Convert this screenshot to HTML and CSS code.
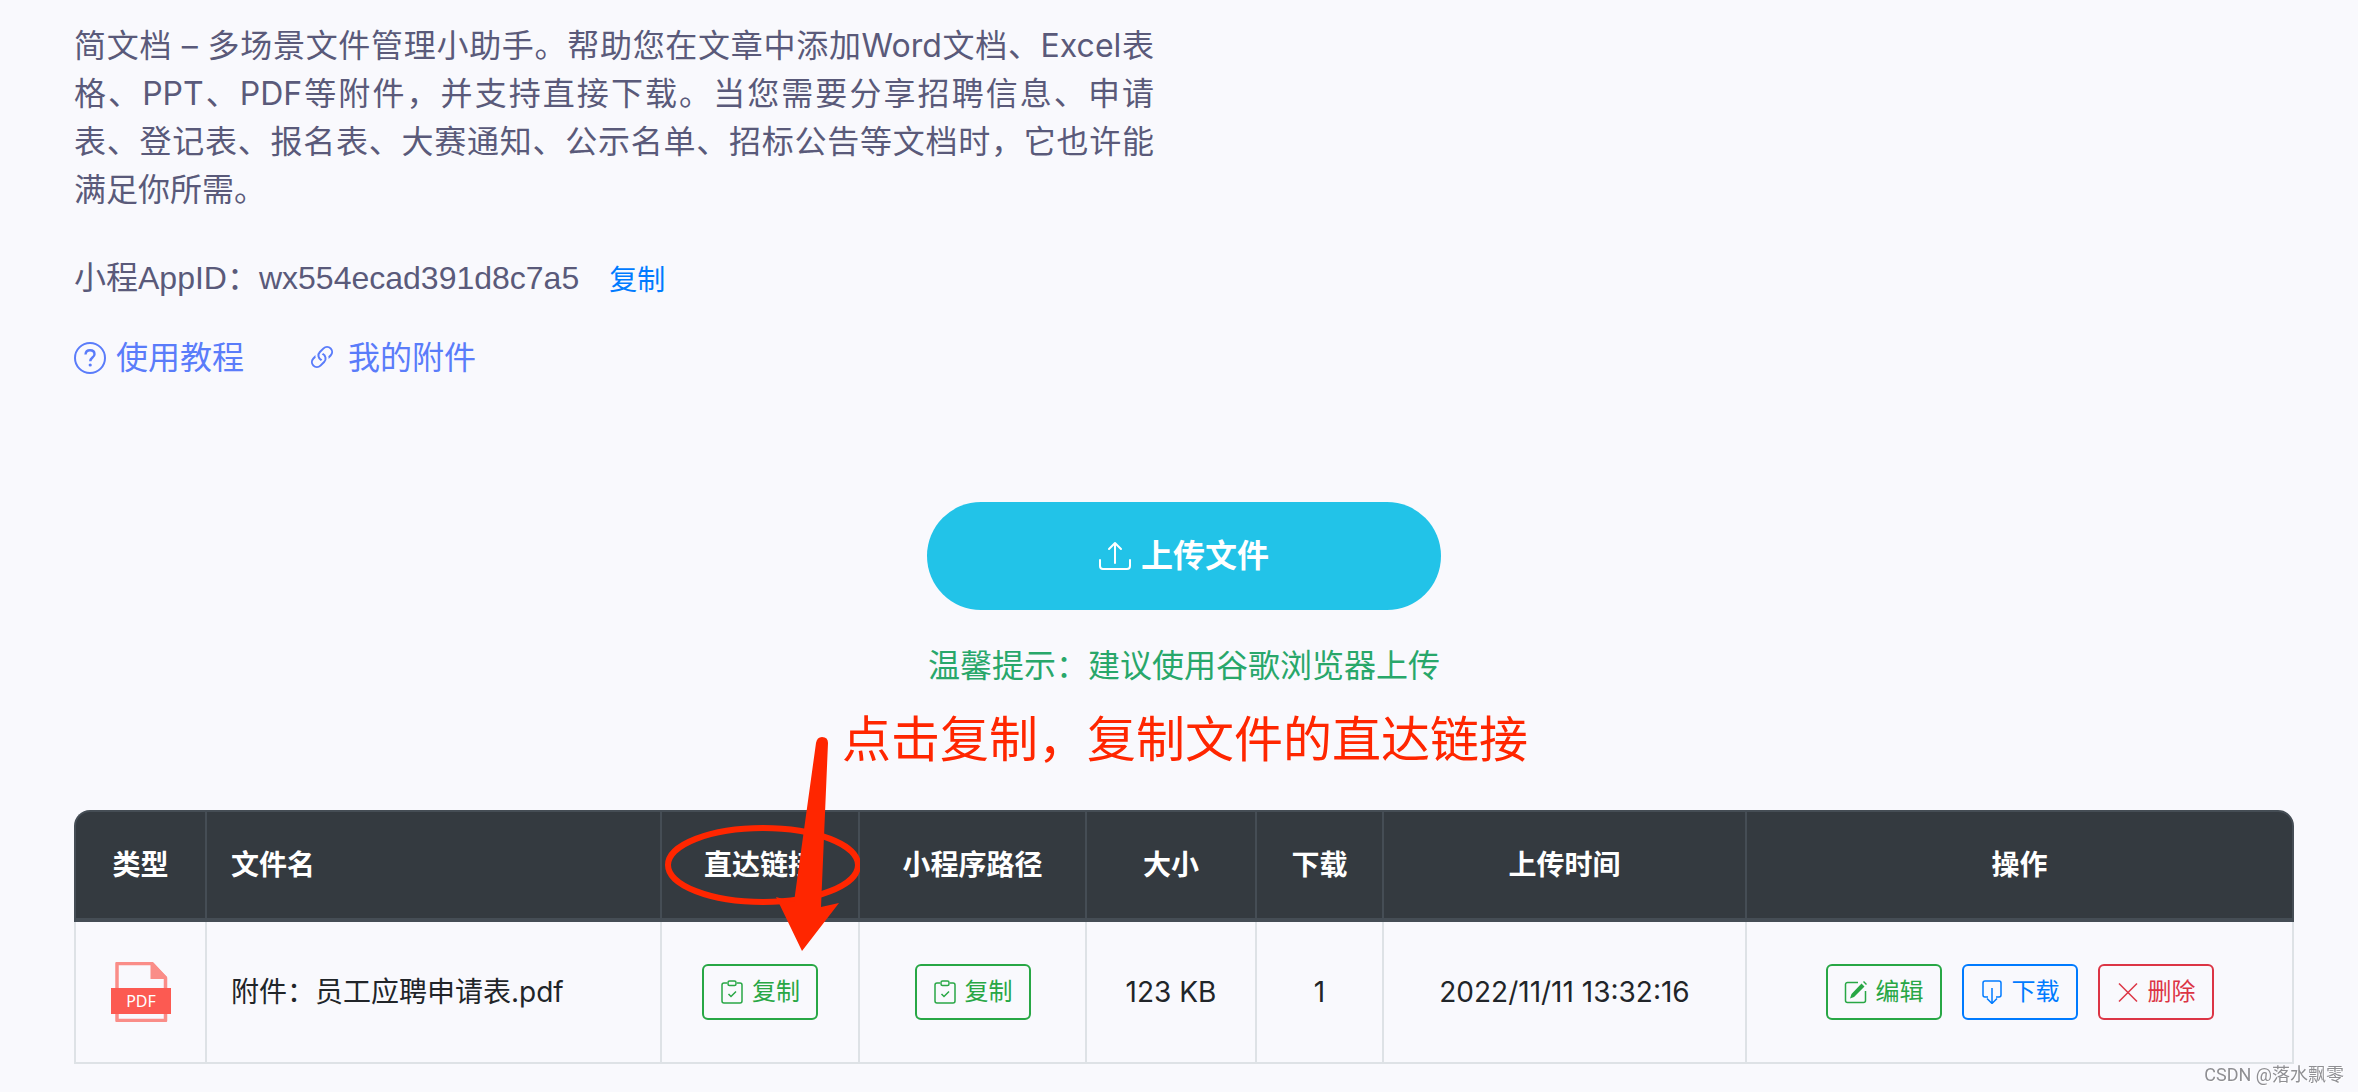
FILE: index.html
```html
<!DOCTYPE html>
<html lang="zh-CN">
<head>
  <meta charset="UTF-8">
  <meta name="viewport" content="width=device-width, initial-scale=1.0">
  <title>简文档 - 我的附件</title>
  <link rel="stylesheet" href="styles.css">
</head>
<body>
  <main class="container">
    <p class="intro">简文档 – 多场景文件管理小助手。帮助您在文章中添加Word文档、Excel表格、PPT、PDF等附件，并支持直接下载。当您需要分享招聘信息、申请表、登记表、报名表、大赛通知、公示名单、招标公告等文档时，它也许能满足你所需。</p>

    <div class="appid">
      <span>小程AppID：wx554ecad391d8c7a5</span>
      <button type="button" class="copy-link">复制</button>
    </div>

    <nav class="links">
      <a href="#help">
        <svg class="icon-help" viewBox="0 0 32 32" fill="none" stroke="currentColor" stroke-width="2">
          <circle cx="16" cy="16" r="15"/>
          <path d="M11.500 12.500c.2-2.700 1.900-4.200 4.500-4.200s4.500 1.500 4.500 3.900c0 3.400-4.200 3.300-4.200 7" stroke-width="2.400"/>
          <circle cx="16.200" cy="23" r="1.600" fill="currentColor" stroke="none"/>
        </svg>
        使用教程
      </a>
      <a href="#files">
        <svg class="icon-link" viewBox="0 0 16 16" fill="currentColor">
          <path d="M4.715 6.542 3.343 7.914a3 3 0 1 0 4.243 4.243l1.828-1.829A3 3 0 0 0 8.586 5.500L8 6.086a1 1 0 0 0-.154.199 2 2 0 0 1 .861 3.337L6.880 11.450a2 2 0 1 1-2.830-2.830l.793-.792a4 4 0 0 1-.128-1.287z"/>
          <path d="M6.586 4.672A3 3 0 0 0 7.414 9.500l.775-.776a2 2 0 0 1-.896-3.346L9.120 3.550a2 2 0 1 1 2.830 2.830l-.793.792c.112.420.155.855.128 1.287l1.372-1.372a3 3 0 1 0-4.243-4.243z"/>
        </svg>
        我的附件
      </a>
    </nav>

    <section class="upload">
      <button type="button" class="upload-btn">
        <svg class="icon-upload" viewBox="0 0 32 32" fill="none" stroke="currentColor" stroke-width="2" stroke-linecap="round" stroke-linejoin="round">
          <path d="M1 20v6a3 3 0 0 0 3 3h24a3 3 0 0 0 3-3v-6"/>
          <path d="M16 23V3M10 9l6-6 6 6"/>
        </svg>
        上传文件
      </button>
      <p class="tip">温馨提示：建议使用谷歌浏览器上传</p>
    </section>

    <table class="files">
      <colgroup>
        <col class="col-type">
        <col>
        <col class="col-direct">
        <col class="col-path">
        <col class="col-size">
        <col class="col-count">
        <col class="col-time">
        <col class="col-actions">
      </colgroup>
      <thead>
        <tr>
          <th>类型</th>
          <th class="name">文件名</th>
          <th class="direct">
            直达链接
            <svg class="mark" viewBox="0 0 200 220" fill="#ff2600">
              <ellipse cx="103" cy="129" rx="95" ry="37" fill="none" stroke="#ff2600" stroke-width="6"/>
              <path d="M156 7 Q157 1 162 1 Q168 1 168 7 L161 171 L179 167 L142 215 L116 161 L134 166 Z"/>
            </svg>
            <span class="mark-text">点击复制，复制文件的直达链接</span>
          </th>
          <th>小程序路径</th>
          <th>大小</th>
          <th>下载</th>
          <th>上传时间</th>
          <th>操作</th>
        </tr>
      </thead>
      <tbody>
        <tr>
          <td>
            <svg class="icon-pdf" viewBox="0 0 60 60">
              <path d="M6 1.500h35L54.500 16v42.500H6z" fill="none" stroke="#fa8d88" stroke-width="3.500" stroke-linejoin="round"/>
              <path d="M39.500 1H42L56 15v2H39.500z" fill="#fa8d88"/>
              <path d="M0 26h60v26H0z" fill="#fc5a52"/>
              <text x="30" y="45" text-anchor="middle" class="pdf-label">PDF</text>
            </svg>
          </td>
          <td class="name">附件：员工应聘申请表.pdf</td>
          <td>
            <button type="button" class="btn btn-green">
              <svg viewBox="0 0 24 24" fill="none" stroke="currentColor" stroke-width="1.500">
                <path d="M7 3H4a2 2 0 0 0-2 2v16a2 2 0 0 0 2 2h16a2 2 0 0 0 2-2V5a2 2 0 0 0-2-2h-3M8.500 14l2.500 2.500 5-5"/>
                <rect x="8" y="1" width="8" height="4.500" rx="1.500"/>
              </svg>
              复制
            </button>
          </td>
          <td>
            <button type="button" class="btn btn-green">
              <svg viewBox="0 0 24 24" fill="none" stroke="currentColor" stroke-width="1.500">
                <path d="M7 3H4a2 2 0 0 0-2 2v16a2 2 0 0 0 2 2h16a2 2 0 0 0 2-2V5a2 2 0 0 0-2-2h-3M8.500 14l2.500 2.500 5-5"/>
                <rect x="8" y="1" width="8" height="4.500" rx="1.500"/>
              </svg>
              复制
            </button>
          </td>
          <td>123 KB</td>
          <td>1</td>
          <td>2022/11/11 13:32:16</td>
          <td>
            <div class="actions">
              <button type="button" class="btn btn-green">
                <svg viewBox="0 0 24 24" fill="none" stroke="currentColor" stroke-width="1.500">
                  <path d="M14 2.500H3.500a2 2 0 0 0-2 2v16a2 2 0 0 0 2 2h16a2 2 0 0 0 2-2V11"/>
                  <path d="M17.500 3.500l3 3L10 17l-4 1.500L7.500 14zM19 2l1-1 3 3-1 1z" fill="currentColor" stroke="none"/>
                </svg>
                编辑
              </button>
              <button type="button" class="btn btn-blue">
                <svg viewBox="0 0 24 24" fill="none" stroke="currentColor" stroke-width="1.500">
                  <path d="M8 17H5a2 2 0 0 1-2-2V3a2 2 0 0 1 2-2h14a2 2 0 0 1 2 2v12a2 2 0 0 1-2 2h-3M12 8v15M7 18.500l5 5 5-5"/>
                </svg>
                下载
              </button>
              <button type="button" class="btn btn-red">
                <svg viewBox="0 0 24 24" fill="none" stroke="currentColor" stroke-width="1.500">
                  <path d="M3 3.500l18 18M21 3.500l-18 18"/>
                </svg>
                删除
              </button>
            </div>
          </td>
        </tr>
      </tbody>
    </table>
  </main>
  <div class="watermark">CSDN @落水飘零</div>
</body>
</html>
```
FILE: styles.css
```css
* {
  box-sizing: border-box;
}
body {
  margin: 0;
  background-color: #f9f9fd;
  color: #212529;
  font-family: Inter, "Noto Sans CJK SC", sans-serif;
  font-size: 28px;
}
button {
  font-family: inherit;
  cursor: pointer;
}
.container {
  padding: 22px 64px 0 74px;
}
.intro,
.appid {
  color: #5a5a7a;
  font-size: 32px;
  line-height: 48px;
}
.intro {
  width: 1080px;
  max-width: 100%;
  margin: 0;
  text-align: justify;
}
.appid {
  display: flex;
  align-items: center;
  gap: 30px;
  margin-top: 40px;
  font-family: "Liberation Sans", "Noto Sans CJK SC", sans-serif;
}
.copy-link {
  padding: 0;
  border: none;
  background: none;
  color: #007bff;
  font-size: 28px;
}
.links {
  display: flex;
  gap: 62px;
  margin-top: 32px;
  font-size: 32px;
  line-height: 48px;
}
.links a {
  display: flex;
  align-items: center;
  gap: 10px;
  color: #5a7cfa;
  text-decoration: none;
}
.icon-help {
  width: 32px;
  height: 32px;
}
.icon-link {
  width: 32px;
  height: 32px;
}
.upload {
  display: flex;
  flex-direction: column;
  align-items: center;
  margin-top: 120px;
}
.upload-btn {
  display: flex;
  align-items: center;
  justify-content: center;
  gap: 10px;
  width: 514px;
  height: 108px;
  border: none;
  border-radius: 54px;
  background-color: #22c3e8;
  color: #fff;
  font-size: 32px;
  font-weight: bold;
  line-height: 48px;
}
.icon-upload {
  width: 32px;
  height: 32px;
}
.tip {
  margin: 32px 0 0;
  color: #28a76a;
  font-size: 32px;
  line-height: 48px;
}

/* 文件列表 */
.files {
  width: 100%;
  margin-top: 120px;
  table-layout: fixed;
  border-collapse: separate;
  border-spacing: 0;
  line-height: 40px;
}
.col-type { width: 131px; }
.col-direct { width: 198px; }
.col-path { width: 227px; }
.col-size { width: 170px; }
.col-count { width: 127px; }
.col-time { width: 363px; }
.col-actions { width: 549px; }
.files th,
.files td {
  padding: 0;
  text-align: center;
  border-left: 2px solid #dee2e6;
}
.files th {
  height: 112px;
  background-color: #343a40;
  color: #fff;
  font-weight: bold;
  border-top: 2px solid #454d55;
  border-bottom: 4px solid #454d55;
  border-left-color: #454d55;
}
.files td {
  height: 142px;
  border-bottom: 2px solid #dee2e6;
}
.files th:last-child {
  border-right: 2px solid #454d55;
  border-top-right-radius: 16px;
}
.files th:first-child {
  border-top-left-radius: 16px;
}
.files td:last-child {
  border-right: 2px solid #dee2e6;
}
.files .name {
  padding-left: 24px;
  text-align: left;
}
.icon-pdf {
  display: block;
  width: 60px;
  height: 60px;
  margin: 0 auto;
}
.pdf-label {
  fill: #fff;
  font-family: "Noto Sans", sans-serif;
  font-size: 16px;
}
.btn {
  display: inline-flex;
  align-items: center;
  justify-content: center;
  gap: 8px;
  width: 116px;
  height: 56px;
  padding: 0;
  border: 2px solid;
  border-radius: 6px;
  background: none;
  font-size: 24px;
  line-height: 36px;
  vertical-align: middle;
}
.btn svg {
  width: 24px;
  height: 24px;
}
.btn-green { color: #28a745; border-color: #28a745; }
.btn-blue { color: #007bff; border-color: #007bff; }
.btn-red { color: #dc3545; border-color: #dc3545; }
.actions {
  display: flex;
  justify-content: center;
  gap: 20px;
}

/* 标注 */
.files .direct {
  position: relative;
}
.mark {
  position: absolute;
  top: -76px;
  left: -2px;
  z-index: 1;
  width: 200px;
  height: 220px;
}
.mark-text {
  position: absolute;
  top: -108px;
  left: 180px;
  color: #ff2600;
  font-size: 49px;
  font-weight: 400;
  line-height: 72px;
  white-space: nowrap;
}
.watermark {
  position: fixed;
  right: 14px;
  bottom: 6px;
  color: #8f8f93;
  font-family: Roboto, "Noto Sans CJK SC", sans-serif;
  font-size: 18px;
  text-shadow: 1px 1px 0 #fff;
}
```
